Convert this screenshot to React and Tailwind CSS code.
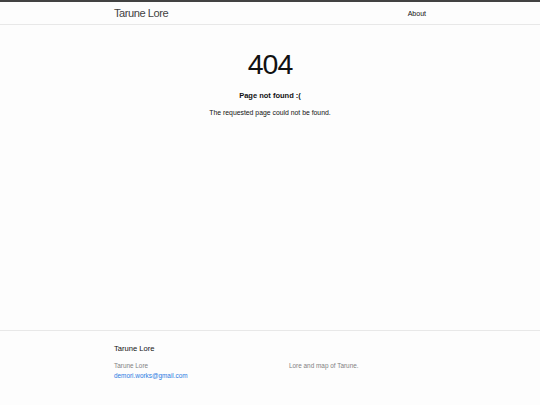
export default function App() {
  return (
    <div
      className="min-h-[405px] flex flex-col bg-[#fdfdfd] text-[#111111]"
      style={{ fontFamily: '"Liberation Sans", Arial, sans-serif' }}
    >
      <header className="border-t-2 border-b border-t-[#424242] border-b-[#e8e8e8] bg-[#fdfdfd]">
        <div className="w-[312px] mx-auto flex justify-between items-center h-[22px]">
          <a className="text-[11.1px] leading-[22px] tracking-[-0.45px] text-[#424242]">Tarune Lore</a>
          <nav className="pb-[4px]">
            <a className="text-[7px] leading-[16px] text-[#111111]">About</a>
          </nav>
        </div>
      </header>
      <main className="flex-1">
        <div className="w-[312px] mx-auto text-center">
          <h1 className="mt-[25px] text-[28.5px] leading-[29px] tracking-[-1px] text-[#111111]">404</h1>
          <h2 className="mt-[12px] text-[7.5px] leading-[10px] font-bold">Page not found :(</h2>
          <p className="mt-[7px] text-[6.85px] leading-[10px]">The requested page could not be found.</p>
        </div>
      </main>
      <footer className="h-[75px] border-t border-[#e8e8e8]">
        <div className="w-[312px] mx-auto pt-[13px]">
          <h2 className="text-[7.6px] leading-[10px] text-[#111111]">Tarune Lore</h2>
          <div className="mt-[7px] flex text-[6.4px] leading-[9.5px] text-[#828282]">
            <div className="w-[175px]">
              <div>Tarune Lore</div>
              <a className="text-[#2a7ae2]">demori.works@gmail.com</a>
            </div>
            <div>
              <p>Lore and map of Tarune.</p>
            </div>
          </div>
        </div>
      </footer>
    </div>
  );
}
